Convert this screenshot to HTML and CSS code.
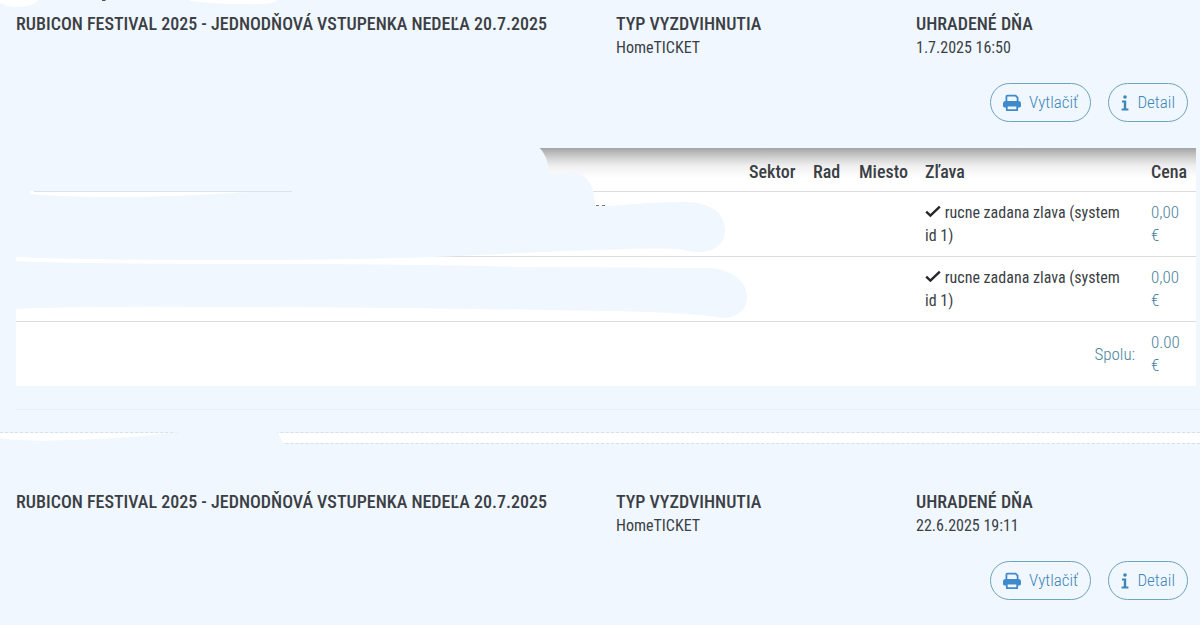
FILE: index.html
```html
<!DOCTYPE html>
<html lang="sk">
<head>
<meta charset="utf-8">
<meta name="viewport" content="width=device-width, initial-scale=1">
<title>Vstupenky</title>
<link rel="stylesheet" href="styles.css">
</head>
<body>
<svg class="symbols" width="0" height="0" aria-hidden="true">
  <symbol id="print" viewBox="0 0 18 18">
    <path d="M3.4 8V2.6Q3.4 1.6 4.4 1.600H12.600L14.600 3.600V8" fill="none" stroke="currentColor" stroke-width="1.8"/>
    <path d="M2.600 7H15.400Q18 7 18 9.600V12Q18 13.400 16.600 13.400H1.400Q0 13.400 0 12V9.600Q0 7 2.600 7Z" fill="currentColor"/>
    <path d="M3.800 11.600H14.200V16.200H3.800Z" fill="#f0f7fe" stroke="currentColor" stroke-width="1.8" stroke-linejoin="round"/>
  </symbol>
  <symbol id="info" viewBox="0 0 8 18">
    <circle cx="4" cy="3" r="1.8" fill="currentColor"/>
    <path d="M1 6.6H5.2V14.6H7.4V16.6H.6V14.6H2.8V8.6H1Z" fill="currentColor"/>
  </symbol>
  <symbol id="check" viewBox="0 0 16 13">
    <path d="M1.2 6.6L5.4 10.6L14.8 1.6" fill="none" stroke="currentColor" stroke-width="2.4"/>
  </symbol>
</svg>
<main class="orders">
  <section class="order order-first">
    <div class="summary">
      <div class="field"><h2 class="label">RUBICON FESTIVAL 2025 - JEDNODŇOVÁ VSTUPENKA NEDEĽA 20.7.2025</h2></div>
      <div class="field"><h2 class="label">TYP VYZDVIHNUTIA</h2><p class="value">HomeTICKET</p></div>
      <div class="field"><h2 class="label">UHRADENÉ DŇA</h2><p class="value">1.7.2025 16:50</p></div>
    </div>
    <div class="actions">
      <button class="pill" type="button"><svg class="icon-print"><use href="#print"/></svg>Vytlačiť</button>
      <button class="pill" type="button"><svg class="icon-info"><use href="#info"/></svg>Detail</button>
    </div>
    <table class="seats">
      <colgroup><col><col class="c-sektor"><col class="c-rad"><col class="c-miesto"><col class="c-zlava"><col class="c-cena"></colgroup>
      <thead>
        <tr><th></th><th>Sektor</th><th>Rad</th><th>Miesto</th><th>Zľava</th><th>Cena</th></tr>
      </thead>
      <tbody>
        <tr><td></td><td></td><td></td><td></td><td class="discount"><svg class="icon-check"><use href="#check"/></svg> rucne zadana zlava (system id 1)</td><td class="price">0,00 €</td></tr>
        <tr><td></td><td></td><td></td><td></td><td class="discount"><svg class="icon-check"><use href="#check"/></svg> rucne zadana zlava (system id 1)</td><td class="price">0,00 €</td></tr>
      </tbody>
      <tfoot>
        <tr><td class="price total" colspan="5">Spolu:</td><td class="price">0.00 €</td></tr>
      </tfoot>
    </table>
    <hr class="rule">
  </section>
  <section class="order">
    <div class="summary">
      <div class="field"><h2 class="label">RUBICON FESTIVAL 2025 - JEDNODŇOVÁ VSTUPENKA NEDEĽA 20.7.2025</h2></div>
      <div class="field"><h2 class="label">TYP VYZDVIHNUTIA</h2><p class="value">HomeTICKET</p></div>
      <div class="field"><h2 class="label">UHRADENÉ DŇA</h2><p class="value">22.6.2025 19:11</p></div>
    </div>
    <div class="actions">
      <button class="pill" type="button"><svg class="icon-print"><use href="#print"/></svg>Vytlačiť</button>
      <button class="pill" type="button"><svg class="icon-info"><use href="#info"/></svg>Detail</button>
    </div>
  </section>
  <!-- brush strokes that hide the private details -->
  <svg class="brush" width="760" height="480" aria-hidden="true">
    <path fill="#fff" d="M0 0H39Q32 7 18 7Q6 7 0 3ZM190 1Q225 5 262 4Q275 4 277 0H190Z"/>
    <path fill="#555" d="M102 0H106L105 1H102Z"/>
    <g fill="#f0f7fe">
      <path d="M0 145H537Q549 156 549 174L572 172C588 173 595 188 595 206L612 206Q650 202 684 202C712 202 725 214 725 230C725 246 712 252 700 252Q688 252 680 249Q650 247 520 253Q400 260 230 260Q80 260 15 257H0Z"/>
      <path d="M0 261H15Q70 264 300 264Q400 264 520 267L708 268C733 269 747 282 747 297C747 311 736 318 722 318Q690 312 600 311Q400 307 230 307Q60 306 15 309H0Z"/>
      <path d="M0 438Q25 442 70 440Q130 438 160 434L190 431H277L284 445H0Z"/>
    </g>
    <path fill="#fff" d="M30 191H262Q180 197 110 197Q60 197 30 194Z"/>
    <path stroke="#dde2e6" d="M34 191.500H292"/>
    <path stroke="#777" stroke-dasharray="3 3" d="M596 205.500H605"/>
  </svg>
</main>
</body>
</html>
```
FILE: styles.css
```css
* { box-sizing: border-box; }
body {
  margin: 0;
  background: #fff;
  color: #3b3f45;
  font: 300 17px/23px "Roboto Condensed", "Liberation Sans Narrow", Roboto, sans-serif;
}
.symbols { position: absolute; }
.orders { position: relative; }
.order {
  padding: 46px 0 26px;
  background: #f0f7fe;
  border-top: 1px dashed #d3e2e6;
}
.order + .order { margin-top: 10px; }
.order-first {
  padding: 12px 0 22px;
  border-top: 0;
  border-bottom: 1px dashed #d3e2e6;
}
.summary { display: grid; grid-template-columns: 2fr 1fr 1fr; }
.field { padding: 0 0 0 16px; }
.label { margin: 0; font-size: 18px; font-weight: 500; line-height: 24px; white-space: nowrap; }
.value { margin: 0; font-size: 16px; font-weight: 400; }
.actions { display: flex; justify-content: flex-end; gap: 17px; padding: 24px 12px 0; }
.pill {
  display: flex;
  align-items: center;
  gap: 8px;
  height: 39px;
  padding: 0 12px;
  border: 1px solid #6ea3bd;
  border-radius: 20px;
  background: transparent;
  color: #3f86b8;
  font: inherit;
}
.icon-print { width: 18px; height: 18px; color: #3f8acb; }
.icon-info { width: 8px; height: 18px; }
.icon-check { width: 16px; height: 13px; color: #24272b; }
.seats {
  width: calc(100% - 20px);
  margin: 26px 4px 23px 16px;
  border-collapse: separate;
  border-spacing: 0;
  table-layout: fixed;
  background: #fff;
}
.seats th {
  height: 44px;
  padding: 4px 8px 0;
  border-bottom: 1px solid #dcdcde;
  font-size: 18px;
  font-weight: 500;
  text-align: left;
}
.seats thead {
  background: linear-gradient(#a3a4a6, #b7b7b8 4px, #d2d2d3 10px, #f0f0f0 18px, #fff 30px);
}
.seats td { padding: 9px 8px; vertical-align: middle; }
.seats tbody td { border-bottom: 1px solid #dcdcde; }
.seats .discount { font-size: 16px; font-weight: 400; }
.seats .price { color: #47829b; }
.seats .total { text-align: right; }
.c-sektor { width: 64px; }
.c-rad { width: 46px; }
.c-miesto { width: 66px; }
.c-zlava { width: 226px; }
.c-cena { width: 53px; }
.rule { margin: 0 0 0 16px; border: 0; border-top: 1px solid #ebeff8; }
.brush { position: absolute; top: 0; left: 0; }
```
